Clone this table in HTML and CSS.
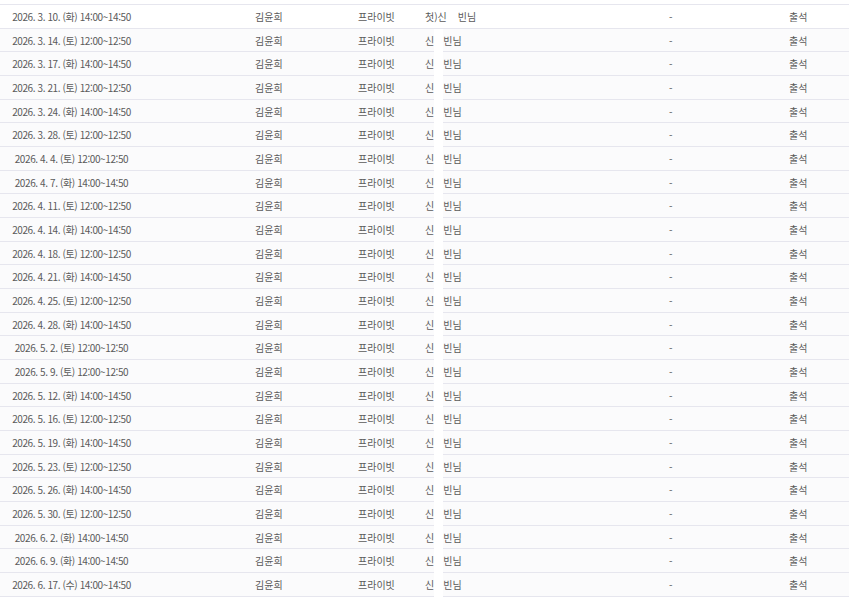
FILE: index.html
```html
<!DOCTYPE html>
<html lang="ko">
<head>
<meta charset="utf-8">
<link rel="stylesheet" href="styles.css">
</head>
<body>
<div class="list">
  <div class="row first"><div class="c-date">2026. 3. 10. (화) 14:00~14:50</div><div class="c-teacher">김윤희</div><div class="c-type">프라이빗</div><div class="c-name">첫)신<span class="gap"></span>빈님</div><div class="c-memo">-</div><div class="c-status">출석</div></div>
  <div class="row"><div class="c-date">2026. 3. 14. (토) 12:00~12:50</div><div class="c-teacher">김윤희</div><div class="c-type">프라이빗</div><div class="c-name">신<span class="mask"></span>빈님</div><div class="c-memo">-</div><div class="c-status">출석</div></div>
  <div class="row"><div class="c-date">2026. 3. 17. (화) 14:00~14:50</div><div class="c-teacher">김윤희</div><div class="c-type">프라이빗</div><div class="c-name">신<span class="mask"></span>빈님</div><div class="c-memo">-</div><div class="c-status">출석</div></div>
  <div class="row"><div class="c-date">2026. 3. 21. (토) 12:00~12:50</div><div class="c-teacher">김윤희</div><div class="c-type">프라이빗</div><div class="c-name">신<span class="mask"></span>빈님</div><div class="c-memo">-</div><div class="c-status">출석</div></div>
  <div class="row"><div class="c-date">2026. 3. 24. (화) 14:00~14:50</div><div class="c-teacher">김윤희</div><div class="c-type">프라이빗</div><div class="c-name">신<span class="mask"></span>빈님</div><div class="c-memo">-</div><div class="c-status">출석</div></div>
  <div class="row"><div class="c-date">2026. 3. 28. (토) 12:00~12:50</div><div class="c-teacher">김윤희</div><div class="c-type">프라이빗</div><div class="c-name">신<span class="mask"></span>빈님</div><div class="c-memo">-</div><div class="c-status">출석</div></div>
  <div class="row"><div class="c-date">2026. 4. 4. (토) 12:00~12:50</div><div class="c-teacher">김윤희</div><div class="c-type">프라이빗</div><div class="c-name">신<span class="mask"></span>빈님</div><div class="c-memo">-</div><div class="c-status">출석</div></div>
  <div class="row"><div class="c-date">2026. 4. 7. (화) 14:00~14:50</div><div class="c-teacher">김윤희</div><div class="c-type">프라이빗</div><div class="c-name">신<span class="mask"></span>빈님</div><div class="c-memo">-</div><div class="c-status">출석</div></div>
  <div class="row"><div class="c-date">2026. 4. 11. (토) 12:00~12:50</div><div class="c-teacher">김윤희</div><div class="c-type">프라이빗</div><div class="c-name">신<span class="mask"></span>빈님</div><div class="c-memo">-</div><div class="c-status">출석</div></div>
  <div class="row"><div class="c-date">2026. 4. 14. (화) 14:00~14:50</div><div class="c-teacher">김윤희</div><div class="c-type">프라이빗</div><div class="c-name">신<span class="mask"></span>빈님</div><div class="c-memo">-</div><div class="c-status">출석</div></div>
  <div class="row"><div class="c-date">2026. 4. 18. (토) 12:00~12:50</div><div class="c-teacher">김윤희</div><div class="c-type">프라이빗</div><div class="c-name">신<span class="mask"></span>빈님</div><div class="c-memo">-</div><div class="c-status">출석</div></div>
  <div class="row"><div class="c-date">2026. 4. 21. (화) 14:00~14:50</div><div class="c-teacher">김윤희</div><div class="c-type">프라이빗</div><div class="c-name">신<span class="mask"></span>빈님</div><div class="c-memo">-</div><div class="c-status">출석</div></div>
  <div class="row"><div class="c-date">2026. 4. 25. (토) 12:00~12:50</div><div class="c-teacher">김윤희</div><div class="c-type">프라이빗</div><div class="c-name">신<span class="mask"></span>빈님</div><div class="c-memo">-</div><div class="c-status">출석</div></div>
  <div class="row"><div class="c-date">2026. 4. 28. (화) 14:00~14:50</div><div class="c-teacher">김윤희</div><div class="c-type">프라이빗</div><div class="c-name">신<span class="mask"></span>빈님</div><div class="c-memo">-</div><div class="c-status">출석</div></div>
  <div class="row"><div class="c-date">2026. 5. 2. (토) 12:00~12:50</div><div class="c-teacher">김윤희</div><div class="c-type">프라이빗</div><div class="c-name">신<span class="mask"></span>빈님</div><div class="c-memo">-</div><div class="c-status">출석</div></div>
  <div class="row"><div class="c-date">2026. 5. 9. (토) 12:00~12:50</div><div class="c-teacher">김윤희</div><div class="c-type">프라이빗</div><div class="c-name">신<span class="mask"></span>빈님</div><div class="c-memo">-</div><div class="c-status">출석</div></div>
  <div class="row"><div class="c-date">2026. 5. 12. (화) 14:00~14:50</div><div class="c-teacher">김윤희</div><div class="c-type">프라이빗</div><div class="c-name">신<span class="mask"></span>빈님</div><div class="c-memo">-</div><div class="c-status">출석</div></div>
  <div class="row"><div class="c-date">2026. 5. 16. (토) 12:00~12:50</div><div class="c-teacher">김윤희</div><div class="c-type">프라이빗</div><div class="c-name">신<span class="mask"></span>빈님</div><div class="c-memo">-</div><div class="c-status">출석</div></div>
  <div class="row"><div class="c-date">2026. 5. 19. (화) 14:00~14:50</div><div class="c-teacher">김윤희</div><div class="c-type">프라이빗</div><div class="c-name">신<span class="mask"></span>빈님</div><div class="c-memo">-</div><div class="c-status">출석</div></div>
  <div class="row"><div class="c-date">2026. 5. 23. (토) 12:00~12:50</div><div class="c-teacher">김윤희</div><div class="c-type">프라이빗</div><div class="c-name">신<span class="mask"></span>빈님</div><div class="c-memo">-</div><div class="c-status">출석</div></div>
  <div class="row"><div class="c-date">2026. 5. 26. (화) 14:00~14:50</div><div class="c-teacher">김윤희</div><div class="c-type">프라이빗</div><div class="c-name">신<span class="mask"></span>빈님</div><div class="c-memo">-</div><div class="c-status">출석</div></div>
  <div class="row"><div class="c-date">2026. 5. 30. (토) 12:00~12:50</div><div class="c-teacher">김윤희</div><div class="c-type">프라이빗</div><div class="c-name">신<span class="mask"></span>빈님</div><div class="c-memo">-</div><div class="c-status">출석</div></div>
  <div class="row"><div class="c-date">2026. 6. 2. (화) 14:00~14:50</div><div class="c-teacher">김윤희</div><div class="c-type">프라이빗</div><div class="c-name">신<span class="mask"></span>빈님</div><div class="c-memo">-</div><div class="c-status">출석</div></div>
  <div class="row"><div class="c-date">2026. 6. 9. (화) 14:00~14:50</div><div class="c-teacher">김윤희</div><div class="c-type">프라이빗</div><div class="c-name">신<span class="mask"></span>빈님</div><div class="c-memo">-</div><div class="c-status">출석</div></div>
  <div class="row"><div class="c-date">2026. 6. 17. (수) 14:00~14:50</div><div class="c-teacher">김윤희</div><div class="c-type">프라이빗</div><div class="c-name">신<span class="mask"></span>빈님</div><div class="c-memo">-</div><div class="c-status">출석</div></div>
</div>
</body>
</html>
```

FILE: styles.css
```css
html, body {
  margin: 0;
  padding: 0;
  background: #ffffff;
}

body {
  font-family: "Noto Sans CJK KR", "Noto Sans", sans-serif;
  font-size: 10px;
  color: #5a5a5a;
}

.list {
  margin-top: 4px;
  border-top: 1px solid #e6e6ee;
}

.row {
  display: grid;
  grid-template-columns: 143px 215px 67px 244px 120px 1fr;
  height: 22.68px;
  border-bottom: 1px solid #e6e6ee;
  background: #fbfbfc;
}

.row.first {
  background: #ffffff;
}

.row > div {
  display: flex;
  align-items: center;
  white-space: nowrap;
}

.c-date {
  justify-content: center;
  letter-spacing: -0.4px;
}

.c-teacher {
  padding-left: 112px;
}

.c-name {
  align-items: center;
}

.gap {
  display: inline-block;
  width: 11px;
}

.mask {
  align-self: flex-start;
  width: 9px;
  height: calc(100% + 1px);
  background: #ffffff;
}
```
